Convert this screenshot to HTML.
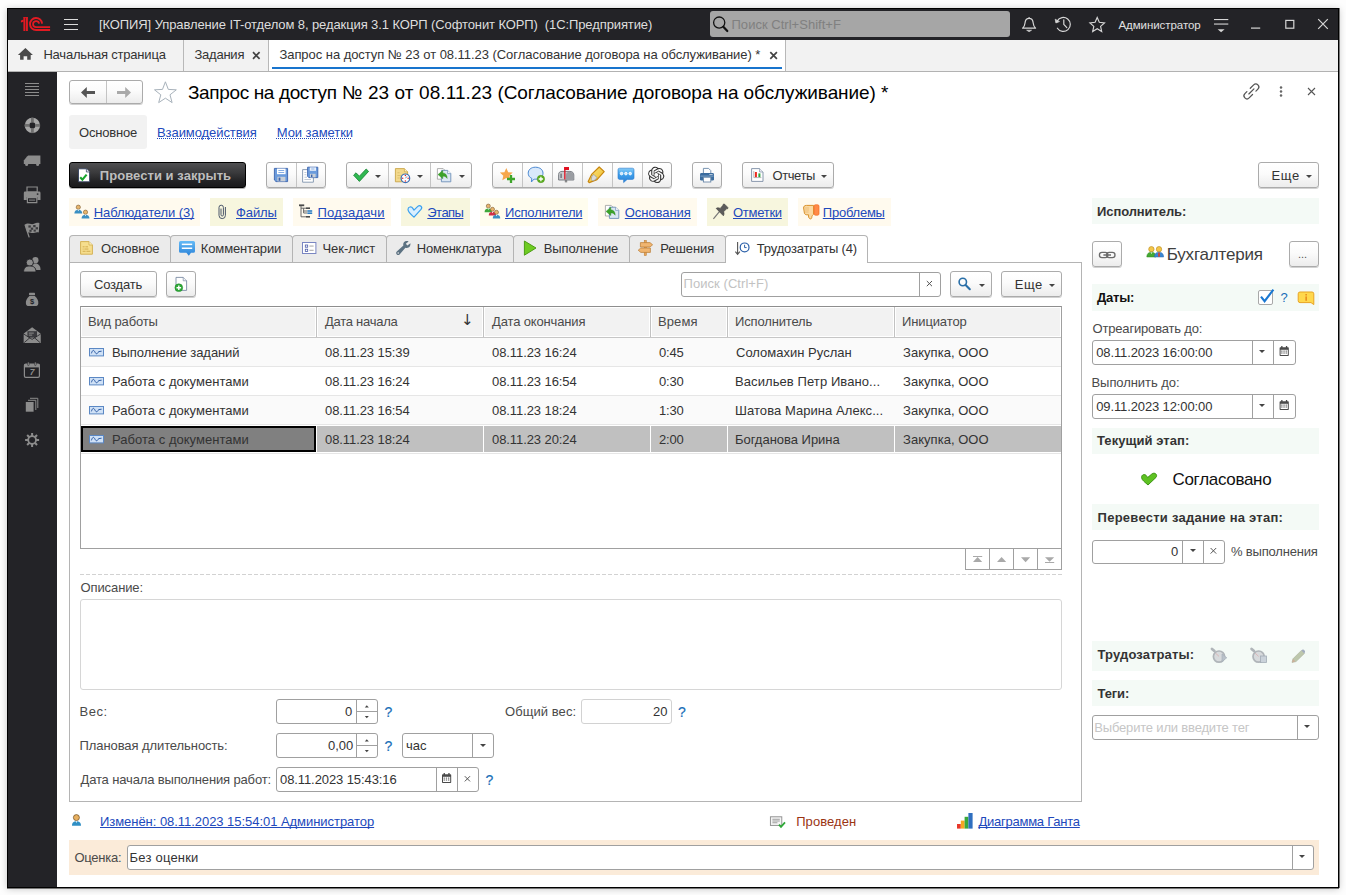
<!DOCTYPE html>
<html lang="ru">
<head>
<meta charset="utf-8">
<title>Запрос на доступ № 23 от 08.11.23</title>
<style>
html,body{margin:0;padding:0;width:1346px;height:895px;overflow:hidden;background:#fdfdfd;}
body{font-family:"Liberation Sans",sans-serif;font-size:13px;color:#333;position:relative;}
.a{position:absolute;}
.t{position:absolute;white-space:nowrap;line-height:16px;font-size:13px;color:#333;}
.b{font-weight:bold;}
.lnk{color:#2149bc;text-decoration:underline;text-decoration-skip-ink:none;text-underline-offset:1px;text-decoration-thickness:1px;}
.dlnk{color:#2149bc;text-decoration:underline dotted;text-decoration-skip-ink:none;text-underline-offset:1px;text-decoration-thickness:1px;}
.btn{position:absolute;box-sizing:border-box;border:1px solid #ababab;border-radius:3px;background:linear-gradient(#ffffff 0%,#fbfbfb 45%,#ececec 100%);box-shadow:0 1px 0 rgba(0,0,0,.18);}
.sep{position:absolute;width:1px;background:#c4c4c4;}
.inp{position:absolute;box-sizing:border-box;border:1px solid #a0a0a0;border-radius:3px;background:#fff;}
.isep{position:absolute;width:1px;background:#a0a0a0;}
.hdr{position:absolute;background:#f4faf6;}
.chip{position:absolute;height:28px;top:198px;}
.tab{position:absolute;box-sizing:border-box;top:235px;height:27px;border:1px solid #b4b4b4;border-bottom:none;border-radius:4px 4px 0 0;background:#ebebeb;}
.cell{position:absolute;white-space:nowrap;line-height:16px;font-size:13px;color:#333;}
.arr{position:absolute;width:0;height:0;border-left:3px solid transparent;border-right:3px solid transparent;border-top:3px solid #444;}
svg{position:absolute;overflow:visible;z-index:5;pointer-events:none;}
.t,.cell,.q{z-index:6;}
.q{position:absolute;color:#1a6fb8;font-size:14px;line-height:16px;font-weight:normal;-webkit-text-stroke:0.2px #1a6fb8;}
</style>
</head>
<body>
<!-- window frame -->
<div class="a" id="win" style="left:7px;top:8px;width:1332px;height:880px;box-sizing:border-box;border:1px solid #000;background:#fff;box-shadow:1px 0 0 #777,0 1px 0 #777,0 1px 7px rgba(0,0,0,.22);"></div>

<!-- ===== title bar ===== -->
<div class="a" id="titlebar" style="left:8px;top:9px;width:1330px;height:31px;background:#232327;"></div>

<svg style="left:0;top:0" width="1346" height="72" viewBox="0 0 1346 72">
<g fill="#e21a22">
<rect x="23.4" y="17.2" width="1.6" height="13.8"/><rect x="25.6" y="17.2" width="2.3" height="13.8"/><path d="M20.9 20.6 L23.6 19.6 V21.8 L20.9 22.4 Z"/><rect x="23.4" y="17.2" width="4.5" height="0.9"/>
</g>
<g fill="none" stroke="#e21a22">
<path d="M42.1 23.6 A6.05 6.05 0 1 0 36.05 30.05 L50.1 30.05" stroke-width="1.9"/>
<path d="M39.1 23.6 A3.05 3.05 0 1 0 36.05 27.15 L50.1 27.15" stroke-width="1.8"/>
</g>
<!-- search magnifier -->
<g fill="none" stroke="#111" stroke-linecap="round">
<circle cx="719.2" cy="22.6" r="5.6" stroke-width="1.3"/><path d="M723.3 26.8 L727.3 31" stroke-width="2.2"/>
</g>
<!-- bell -->
<g fill="none" stroke="#d6d6d6" stroke-width="1.2" stroke-linejoin="round">
<path d="M1029.1 17 v1.6 M1022.6 28.2 c2.4-2 2.3-4.2 2.6-6.4 c0.4-2.4 2-3.4 3.9-3.4 s3.5 1 3.9 3.4 c0.3 2.2 0.2 4.4 2.6 6.4 z"/>
<path d="M1026.6 30.2 h5 l-2.5 1.5 z" fill="#d6d6d6" stroke-width="0.6"/>
</g>
<!-- history -->
<g fill="none" stroke="#d6d6d6" stroke-width="1.2" stroke-linecap="round" stroke-linejoin="round">
<path d="M1057.2 21 A7 7 0 1 1 1057.4 28.2"/>
<path d="M1055.3 19.6 l0.6 3.3 l3.2 -1.2 z" fill="#d6d6d6" stroke-width="0.8"/>
<path d="M1063.8 19.8 v4.6 l3 3.2"/>
</g>
<!-- star -->
<path d="M1097.2 17.5 l2.1 4.8 5.2 0.55 -3.9 3.5 1.1 5.1 -4.5 -2.7 -4.5 2.7 1.1 -5.1 -3.9 -3.5 5.2 -0.55 z" fill="none" stroke="#d6d6d6" stroke-width="1.15" stroke-linejoin="miter"/>
<!-- menu -->
<g fill="#d6d6d6"><rect x="1214" y="19" width="14.3" height="1.1"/><rect x="1214" y="23.5" width="14.3" height="1.1"/><path d="M1217.6 29.3 h7 l-3.5 2.9 z"/></g>
<!-- min / max / close -->
<rect x="1251" y="27.5" width="9.2" height="1.2" fill="#d6d6d6"/>
<rect x="1285.8" y="20.4" width="8" height="7.8" fill="none" stroke="#d6d6d6" stroke-width="1.2"/>
<path d="M1318.2 19.2 L1327.8 28.8 M1327.8 19.2 L1318.2 28.8" stroke="#d6d6d6" stroke-width="1.2" fill="none"/>
<!-- home -->
<path d="M25.4 48 L32.9 55 H30.7 V59.8 H27.2 V56.2 H23.6 V59.8 H20.1 V55 H17.9 Z" fill="#4a4a4a"/>
<!-- tab close x -->
<path d="M253 52.2 L259.6 58.8 M259.6 52.2 L253 58.8" stroke="#444" stroke-width="1.7" fill="none"/>
<path d="M770.3 52.2 L776.9 58.8 M776.9 52.2 L770.3 58.8" stroke="#444" stroke-width="1.7" fill="none"/>
</svg>

<div class="a" style="left:64px;top:19px;width:14px;height:1px;background:#dcdcdc;"></div>
<div class="a" style="left:64px;top:24px;width:14px;height:1px;background:#dcdcdc;"></div>
<div class="a" style="left:64px;top:29px;width:14px;height:1px;background:#dcdcdc;"></div>
<div class="t" style="letter-spacing:-0.101px;left:99.00px;top:17px;color:#dedede;">[КОПИЯ] Управление IT-отделом 8, редакция 3.1 КОРП (Софтонит КОРП)&nbsp; (1С:Предприятие)</div>
<div class="a" style="left:710px;top:11px;width:300px;height:26px;background:#a6a6a6;border-radius:3px;"></div>
<div class="t" style="letter-spacing:0.026px;left:731.50px;top:16.5px;color:#808080;font-size:13px;">Поиск Ctrl+Shift+F</div>
<div class="t" style="letter-spacing:-0.066px;left:1118.50px;top:16.5px;color:#e0e0e0;font-size:11.5px;">Администратор</div>
<!--ICON:titleicons-->

<!-- ===== open-windows tab bar ===== -->
<div class="a" id="tabbar" style="left:8px;top:40px;width:1330px;height:31px;background:#f2f2f2;"></div>
<div class="a" style="left:8px;top:71px;width:1330px;height:1px;background:#b2b2b2;"></div>
<div class="a" style="left:269px;top:40px;width:516px;height:31px;background:#fff;"></div>
<div class="a" style="left:183px;top:40px;width:1px;height:31px;background:#b8b8b8;"></div>
<div class="a" style="left:268px;top:40px;width:1px;height:31px;background:#b8b8b8;"></div>
<div class="a" style="left:785px;top:40px;width:1px;height:31px;background:#b8b8b8;"></div>
<div class="a" style="left:272px;top:67px;width:510px;height:2px;background:#1874cd;"></div>
<!--ICON:home-->
<div class="t" style="letter-spacing:-0.192px;left:43.40px;top:47px;">Начальная страница</div>
<div class="t" style="letter-spacing:-0.225px;left:194.40px;top:47px;">Задания</div>
<div class="t" style="letter-spacing:-0.047px;left:279.40px;top:47px;">Запрос на доступ № 23 от 08.11.23 (Согласование договора на обслуживание) *</div>
<!--ICON:tabclose-->

<!-- ===== left sidebar ===== -->
<div class="a" id="sidebar" style="left:8px;top:72px;width:49px;height:815px;background:#232327;"></div>

<svg style="left:0;top:72px" width="57" height="400" viewBox="0 72 57 400">
<g fill="#8c8c8c">
<!-- 1 list -->
<rect x="25" y="83" width="14" height="1"/><rect x="25" y="86" width="14" height="1"/><rect x="25" y="89" width="14" height="1"/><rect x="25" y="92" width="14" height="1"/><rect x="25" y="95" width="14" height="1"/>
</g>
<!-- 2 lifebuoy -->
<circle cx="32.4" cy="125.4" r="5.4" fill="none" stroke="#a6a6a6" stroke-width="4.6"/>
<g fill="#6f6f6f"><rect x="31" y="117.7" width="2.8" height="4.6"/><rect x="31" y="128.5" width="2.8" height="4.6"/><rect x="24.7" y="124" width="4.6" height="2.8"/><rect x="35.5" y="124" width="4.6" height="2.8"/></g>
<!-- 3 truck -->
<g fill="#8c8c8c">
<path d="M28.2 155.4 H40.4 V164 H23.8 V160.6 L27 156.6 Z"/>
<circle cx="26.6" cy="164.6" r="1.5"/><circle cx="37.6" cy="164.6" r="1.5"/>
</g>
<!-- 4 printer -->
<g fill="#8c8c8c">
<path d="M27 187 H37.2 V192 H27 Z" fill="none" stroke="#8c8c8c" stroke-width="1.2"/>
<path d="M25 191.6 H39.2 Q40.5 191.6 40.5 193 V200 H37.4 V197 H26.8 V200 H23.8 V193 Q23.8 191.6 25 191.6 Z"/>
<path d="M27.4 197.6 H36.8 V202.6 H27.4 Z" fill="none" stroke="#8c8c8c" stroke-width="1.2"/>
<rect x="29" y="199.6" width="6.2" height="1" />
<rect x="36.8" y="193.4" width="1.6" height="1.4" fill="#232327"/>
</g>
<!-- 5 flag -->
<g>
<path d="M25 224.6 C28 222 31 225.4 34 223.8 S38 222.6 39.4 223 L38.8 232.4 C36 231.6 34 233.4 31.6 233 S28.4 232.4 27.4 233 Z" fill="#8c8c8c"/>
<path d="M25 224.6 L29.2 237.4" stroke="#8c8c8c" stroke-width="1.3" fill="none"/>
<g fill="#3a3a3e"><rect x="28.4" y="225.4" width="2.4" height="2.2"/><rect x="33.2" y="225" width="2.4" height="2.2"/><rect x="30.8" y="227.6" width="2.4" height="2.2"/><rect x="35.6" y="227.2" width="2.4" height="2.2"/><rect x="29.4" y="229.8" width="2.2" height="2"/><rect x="33.6" y="229.6" width="2.2" height="2"/></g>
</g>
<!-- 6 people -->
<g fill="#8c8c8c">
<circle cx="35.4" cy="260.2" r="3.1"/><path d="M31 270 C31 265 33 263.4 35.4 263.4 S40.5 265 40.5 269.6 V270 Z"/>
<circle cx="29.8" cy="262.6" r="3.6" stroke="#232327" stroke-width="0.9"/><path d="M23.6 272 C23.6 267 26.4 266 29.8 266 S36 267 36 272 Z" stroke="#232327" stroke-width="0.9"/>
</g>
<!-- 7 money bag -->
<g fill="#8c8c8c">
<rect x="29" y="292.8" width="6" height="2.2" rx="0.6"/>
<path d="M29.6 295.8 H34.6 C37.6 298.4 38.6 301 38.3 303.4 C38.1 305.2 37 306 35.4 306 H28.8 C27.2 306 26.1 305.2 25.9 303.4 C25.6 301 26.6 298.4 29.6 295.8 Z"/>
</g>
<text x="32.1" y="304.2" font-family="Liberation Sans,sans-serif" font-size="7.5" font-weight="bold" fill="#232327" text-anchor="middle">$</text>
<!-- 8 envelope -->
<g fill="#8c8c8c">
<path d="M23.8 333.4 L32.1 327.2 L40.5 333.4 V342.9 H23.8 Z"/>
<rect x="27.4" y="331.2" width="9.6" height="6.4" fill="#3a3a3e"/>
<rect x="28.8" y="332.6" width="5" height="1" fill="#8c8c8c"/><rect x="28.8" y="334.6" width="3.4" height="1" fill="#8c8c8c"/>
<path d="M23.8 334.4 L32.1 339.4 L40.5 334.4 V342.9 H23.8 Z" fill="#8c8c8c"/>
<path d="M24.2 342.6 L30 337.6 M40.1 342.6 L34.3 337.6 M24 334.2 L32.1 339.4 L40.3 334.2" stroke="#232327" stroke-width="0.8" fill="none"/>
</g>
<!-- 9 calendar -->
<g>
<rect x="24.4" y="364" width="15" height="13.4" rx="1.4" fill="none" stroke="#8c8c8c" stroke-width="1.2"/>
<rect x="24.4" y="364" width="15" height="3.4" fill="#8c8c8c"/>
<rect x="27.6" y="362" width="1.6" height="3.6" rx="0.8" fill="#8c8c8c" stroke="#232327" stroke-width="0.5"/><rect x="34.6" y="362" width="1.6" height="3.6" rx="0.8" fill="#8c8c8c" stroke="#232327" stroke-width="0.5"/>
<text x="32" y="375.4" font-family="Liberation Sans,sans-serif" font-size="8.5" font-weight="bold" font-style="italic" fill="#8c8c8c" text-anchor="middle">7</text>
</g>
<!-- 10 pages -->
<g fill="none" stroke="#8c8c8c" stroke-width="1">
<path d="M30 398.3 H37.8 V408"/><path d="M28 400.3 H35.8 V410"/>
<rect x="25.8" y="402" width="7.8" height="9.7" fill="#8c8c8c" stroke="none"/>
</g>
<!-- 11 gear -->
<g transform="translate(32.1 440)">
<g stroke="#8c8c8c" stroke-width="2" stroke-linecap="butt">
<path d="M0 -7 V7 M-7 0 H7 M-4.95 -4.95 L4.95 4.95 M-4.95 4.95 L4.95 -4.95"/>
</g>
<circle r="3.9" fill="#232327" stroke="#8c8c8c" stroke-width="1.8"/>
</g>
</svg>


<!-- ===== form header ===== -->
<div class="btn" style="left:69px;top:80px;width:74px;height:24px;"></div>
<div class="sep" style="left:106px;top:81px;height:22px;"></div>

<svg style="left:0;top:72px" width="1346" height="40" viewBox="0 72 1346 40">
<path d="M81 92.5 L86.8 87 V91 H95 V94 H86.8 V98 Z" fill="#555"/>
<path d="M131 92.5 L125.2 87 V91 H117 V94 H125.2 V98 Z" fill="#a9a9a9"/>
<path d="M165.4 81.8 l2.9 7.6 8 0.4 -6.3 5 2.1 7.8 -6.7 -4.4 -6.7 4.4 2.1 -7.8 -6.3 -5 8 -0.4 z" fill="#fff" stroke="#a8b2bb" stroke-width="1" stroke-linejoin="miter"/>
<!-- link -->
<g transform="translate(1251.4 91.4) rotate(-45)" fill="none" stroke="#555" stroke-width="1.25" stroke-linecap="round">
<path d="M1.4 -3 H6.2 A3 3 0 0 1 6.2 3 H3.4"/>
<path d="M-1.4 3 H-6.2 A3 3 0 0 1 -6.2 -3 H-3.4"/>
<path d="M-3.6 0 H3.6"/>
</g>
<g fill="#666"><circle cx="1281" cy="87.6" r="1.25"/><circle cx="1281" cy="91.5" r="1.25"/><circle cx="1281" cy="95.4" r="1.25"/></g>
<path d="M1308 88 L1315 95 M1315 88 L1308 95" stroke="#555" stroke-width="1.1" fill="none"/>
</svg>

<div class="t" style="letter-spacing:-0.364px;left:188.00px;top:81px;font-size:19px;line-height:24px;color:#000;">Запрос на доступ</div><div class="t" style="letter-spacing:0.087px;left:342.10px;top:81px;font-size:19px;line-height:24px;color:#000;">№ 23 от 08.11.23</div><div class="t" style="letter-spacing:-0.085px;left:497.40px;top:81px;font-size:19px;line-height:24px;color:#000;">(Согласование договора на обслуживание) *</div>
<!--ICON:formicons-->

<div class="a" style="left:69px;top:115px;width:78px;height:34px;background:#f2f2f2;border-radius:3px;"></div>
<div class="t" style="letter-spacing:-0.193px;left:79.00px;top:125px;">Основное</div>
<div class="t dlnk" style="letter-spacing:-0.078px;left:157.00px;top:125px;">Взаимодействия</div>
<div class="t dlnk" style="letter-spacing:-0.066px;left:276.80px;top:125px;">Мои заметки</div>

<!-- ===== command bar ===== -->
<div class="a" style="left:69px;top:162px;width:177px;height:26px;box-sizing:border-box;border:1px solid #000;border-radius:3px;background:linear-gradient(#505052 0%,#3a3a3c 40%,#232325 75%,#1a1a1c 100%);box-shadow:0 1px 0 rgba(0,0,0,.3);"></div>
<div class="t b" style="letter-spacing:0.056px;left:99.80px;top:168px;color:#bebebe;">Провести и закрыть</div>

<div class="btn" style="left:266px;top:162px;width:60px;height:26px;"></div>
<div class="sep" style="left:296px;top:163px;height:24px;"></div>
<div class="btn" style="left:346px;top:162px;width:126px;height:26px;"></div>
<div class="sep" style="left:388px;top:163px;height:24px;"></div>
<div class="sep" style="left:430px;top:163px;height:24px;"></div>
<div class="arr" style="left:375px;top:175px;"></div>
<div class="arr" style="left:417px;top:175px;"></div>
<div class="arr" style="left:459px;top:175px;"></div>
<div class="btn" style="left:492px;top:162px;width:180px;height:26px;"></div>
<div class="sep" style="left:522px;top:163px;height:24px;"></div>
<div class="sep" style="left:552px;top:163px;height:24px;"></div>
<div class="sep" style="left:582px;top:163px;height:24px;"></div>
<div class="sep" style="left:612px;top:163px;height:24px;"></div>
<div class="sep" style="left:642px;top:163px;height:24px;"></div>
<div class="btn" style="left:692px;top:162px;width:30px;height:26px;"></div>
<div class="btn" style="left:742px;top:162px;width:92px;height:26px;"></div>
<div class="t" style="letter-spacing:-0.459px;left:772.60px;top:168px;">Отчеты</div>
<div class="arr" style="left:821px;top:175px;"></div>
<div class="btn" style="left:1258px;top:162px;width:61px;height:26px;"></div>
<div class="t" style="letter-spacing:0.688px;left:1271.40px;top:168px;">Еще</div>
<div class="arr" style="left:1305.5px;top:175px;"></div>

<svg style="left:0;top:158px" width="1346" height="34" viewBox="0 158 1346 34">
<!-- post & close doc icon -->
<path d="M78.5 168.8 H86.4 L89.6 172 V181.8 H78.5 Z" fill="#fff" stroke="#33415e" stroke-width="0.9"/>
<path d="M86.4 168.8 V172 H89.6" fill="#dfe6f2" stroke="#33415e" stroke-width="0.7"/>
<path d="M80.2 177.2 L82.4 179.6 L86.6 174.6" fill="none" stroke="#18a52e" stroke-width="2.1"/>
<!-- floppy 1 -->
<g>
<path d="M274.4 168.4 H287.6 V181.6 H276 L274.4 180 Z" fill="#6b9bdc" stroke="#3a63ad" stroke-width="0.9"/>
<rect x="277" y="168.6" width="8.6" height="5.6" fill="#fff"/>
<rect x="278.4" y="170" width="5.8" height="0.9" fill="#7aa5e0"/><rect x="278.4" y="172" width="5.8" height="0.9" fill="#7aa5e0"/>
<rect x="277.4" y="176.8" width="8" height="4.6" fill="#c9cfd6"/><rect x="278.6" y="177.6" width="1.8" height="3.2" fill="#3a63ad"/>
</g>
<!-- doc + floppy -->
<g>
<path d="M302.6 169.6 H311 L313.4 172 V182.2 H302.6 Z" fill="#fff" stroke="#7f93ad" stroke-width="0.9"/>
<g fill="#b4bfcc"><rect x="304.4" y="172" width="2" height="0.8"/><rect x="304.4" y="174.4" width="2" height="0.8"/><rect x="304.4" y="176.8" width="2.6" height="0.8"/><rect x="304.4" y="179.2" width="6.6" height="0.8"/></g>
<path d="M307.6 167.2 H317.8 V177.6 H308.8 L307.6 176.4 Z" fill="#6b9bdc" stroke="#3a63ad" stroke-width="0.9"/>
<rect x="309.8" y="167.4" width="6.2" height="3.4" fill="#eaf1fb"/><rect x="311.2" y="168.6" width="3.2" height="0.8" fill="#7aa5e0"/>
<rect x="310" y="173.8" width="5.6" height="3.6" fill="#c9cfd6"/><rect x="311" y="174.6" width="1.4" height="2.4" fill="#3a63ad"/>
</g>
<!-- green check -->
<path d="M353.6 175.2 L356 172.8 L359.4 176.2 L366.2 169 L368.6 171.4 L359.4 181.4 Z" fill="#2fb851" stroke="#1f8a3a" stroke-width="0.9" stroke-linejoin="round"/>
<!-- doc + clock -->
<g>
<path d="M395.4 168.6 H404.4 L407.6 171.8 V181.8 H395.4 Z" fill="#f3d98c" stroke="#c9a648" stroke-width="0.9"/>
<path d="M404.4 168.6 V171.8 H407.6" fill="#faedc0" stroke="#c9a648" stroke-width="0.7"/>
<g fill="#d8bb66"><rect x="397.4" y="172.4" width="2.2" height="0.8"/><rect x="397.4" y="175" width="3.4" height="0.8"/><rect x="397.4" y="177.6" width="2.2" height="0.8"/></g>
<circle cx="405.4" cy="178.3" r="4.3" fill="#fff" stroke="#3a6eb4" stroke-width="1.2"/>
<g fill="#e02a2a"><circle cx="405.4" cy="175.6" r="0.75"/><circle cx="408.1" cy="178.3" r="0.75"/><circle cx="405.4" cy="181" r="0.75"/><circle cx="402.7" cy="178.3" r="0.75"/></g>
<path d="M405.4 178.3 L407 176.4" stroke="#3a6eb4" stroke-width="0.8"/>
</g>
<!-- doc + green back arrow -->
<g>
<path d="M437.4 168.6 H443.2 L444.6 170 V179.2 H437.4 Z" fill="#fff" stroke="#9a9a9a" stroke-width="0.8"/>
<path d="M441.4 170.4 H447.6 L450.8 173.6 V181.8 H441.4 Z" fill="#dbe7f3" stroke="#6c8fb8" stroke-width="0.9"/>
<path d="M447.6 170.4 V173.6 H450.8" fill="#fff" stroke="#6c8fb8" stroke-width="0.7"/>
<path d="M438 174.6 L442.8 170.4 V173 C445.8 173.2 447.2 175.2 447.2 178.4 C446 176.8 445 176.2 442.8 176.2 V178.8 Z" fill="#3ba22a" stroke="#2a8a1c" stroke-width="0.4"/>
</g>
<!-- star + plus -->
<path d="M506.3 168 l1.9 4.2 4.5 0.4 -3.4 3.1 1 4.5 -4 -2.3 -4 2.3 1 -4.5 -3.4 -3.1 4.5 -0.4 z" fill="#f6a74c"/>
<path d="M511 175 V183 M507 179 H515" stroke="#3fa52a" stroke-width="2.3" fill="none"/>
<!-- bubble + plus -->
<path d="M535.4 167.2 C540 167.2 543 169.8 543 173.2 C543 176.8 540 179.2 535.4 179.2 C534.8 179.2 534.4 179.2 534 179.1 L531.4 182 L531.8 178.4 C529.4 177.4 528.2 175.4 528.2 173.2 C528.2 169.8 531 167.2 535.4 167.2 Z" fill="#d9e9fb" stroke="#4a88d2" stroke-width="1"/>
<circle cx="540.9" cy="179" r="3.7" fill="#5aad1f" stroke="#4a9416" stroke-width="0.5"/>
<path d="M540.9 176.8 V181.2 M538.7 179 H543.1" stroke="#fff" stroke-width="1.3"/>
<!-- mailbox -->
<g>
<rect x="564.8" y="179.6" width="2.4" height="2.8" fill="#8a8a8a"/>
<path d="M558.6 180 V174.6 C558.6 172.4 560 171.4 562 171.4 H570 C572.6 171.4 573.8 173 573.8 175 V180 Z" fill="#c9cbce" stroke="#6e7278" stroke-width="0.9"/>
<path d="M566 180 V175 C566 173 567.4 171.8 569.6 171.8 C572 171.8 573.4 173.2 573.4 175 V180 Z" fill="#9a9da2"/>
<rect x="560.4" y="173.6" width="1.4" height="4.4" fill="#6e7278"/>
<rect x="564.2" y="167" width="1.3" height="12.4" fill="#e01020"/><rect x="564.2" y="167" width="4.8" height="3" fill="#e01020"/>
</g>
<!-- highlighter -->
<defs><linearGradient id="gh" x1="0" y1="0" x2="1" y2="1"><stop offset="0" stop-color="#fbe88a"/><stop offset="1" stop-color="#eeb820"/></linearGradient></defs>
<g>
<path d="M599.2 167 L604.2 171.6 L597 179.6 L589.2 182.6 L588.2 181.6 L591.6 174.4 Z" fill="url(#gh)" stroke="#c8860e" stroke-width="1.2" stroke-linejoin="round"/>
<path d="M591.9 176.2 L593.9 174.4 L596.9 177.6 L595.2 179.9 L592.6 181 L591.2 179.4 Z" fill="#dadada" stroke="#8c8c8c" stroke-width="0.6" stroke-linejoin="round"/>
</g>
<!-- chat bubble blue -->
<defs><linearGradient id="gb" x1="0" y1="0" x2="0" y2="1"><stop offset="0" stop-color="#86ccf8"/><stop offset="0.45" stop-color="#3f9fea"/><stop offset="1" stop-color="#2a80d8"/></linearGradient></defs>
<path d="M619.6 168.2 H632.4 Q634 168.2 634 169.8 V177.8 Q634 179.4 632.4 179.4 H627.2 L623.6 182.6 V179.4 H619.6 Q618 179.4 618 177.8 V169.8 Q618 168.2 619.6 168.2 Z" fill="url(#gb)" stroke="#2a7acc" stroke-width="0.6"/>
<g fill="#cfe6fb" stroke="#fff" stroke-width="0.9"><circle cx="621.6" cy="173.6" r="1.3"/><circle cx="625.9" cy="173.6" r="1.3"/><circle cx="630.2" cy="173.6" r="1.3"/></g>
<!-- knot (AI) -->
<g transform="translate(648 166.7) scale(0.683)"><path d="M22.2819 9.8211a5.9847 5.9847 0 0 0-.5157-4.9108 6.0462 6.0462 0 0 0-6.5098-2.9A6.0651 6.0651 0 0 0 4.9807 4.1818a5.9847 5.9847 0 0 0-3.9977 2.9 6.0462 6.0462 0 0 0 .7427 7.0966 5.98 5.98 0 0 0 .511 4.9107 6.051 6.051 0 0 0 6.5146 2.9001A5.9847 5.9847 0 0 0 13.2599 24a6.0557 6.0557 0 0 0 5.7718-4.2058 5.9894 5.9894 0 0 0 3.9977-2.9001 6.0557 6.0557 0 0 0-.7475-7.0729zm-9.022 12.6081a4.4755 4.4755 0 0 1-2.8764-1.0408l.1419-.0804 4.7783-2.7582a.7948.7948 0 0 0 .3927-.6813v-6.7369l2.02 1.1686a.071.071 0 0 1 .038.052v5.5826a4.504 4.504 0 0 1-4.4945 4.4944zm-9.6607-4.1254a4.4708 4.4708 0 0 1-.5346-3.0137l.142.0852 4.783 2.7582a.7712.7712 0 0 0 .7806 0l5.8428-3.3685v2.3324a.0804.0804 0 0 1-.0332.0615L9.74 19.9502a4.4992 4.4992 0 0 1-6.1408-1.6464zM2.3408 7.8956a4.485 4.485 0 0 1 2.3655-1.9728V11.6a.7664.7664 0 0 0 .3879.6765l5.8144 3.3543-2.0201 1.1685a.0757.0757 0 0 1-.071 0l-4.8303-2.7865A4.504 4.504 0 0 1 2.3408 7.872zm16.5963 3.8558L13.1038 8.364 15.1192 7.2a.0757.0757 0 0 1 .071 0l4.8303 2.7913a4.4944 4.4944 0 0 1-.6765 8.1042v-5.6772a.79.79 0 0 0-.407-.667zm2.0107-3.0231l-.142-.0852-4.7735-2.7818a.7759.7759 0 0 0-.7854 0L9.409 9.2297V6.8974a.0662.0662 0 0 1 .0284-.0615l4.8303-2.7866a4.4992 4.4992 0 0 1 6.6802 4.66zM8.3065 12.863l-2.02-1.1638a.0804.0804 0 0 1-.038-.0567V6.0742a4.4992 4.4992 0 0 1 7.3757-3.4537l-.142.0805L8.704 5.459a.7948.7948 0 0 0-.3927.6813zm1.0976-2.3654l2.602-1.4998 2.6069 1.4998v2.9994l-2.5974 1.4997-2.6067-1.4997Z" fill="#333"/></g>
<!-- printer -->
<g>
<path d="M703.4 168.4 H708.6 L710.8 170.6 V174 H703.4 Z" fill="#fff" stroke="#6a88a8" stroke-width="0.9"/>
<path d="M701.4 173 H712.6 Q714 173 714 174.4 V179.2 Q714 180.4 712.6 180.4 H701.4 Q700 180.4 700 179.2 V174.4 Q700 173 701.4 173 Z" fill="#3b6c9e"/>
<rect x="700.4" y="175.6" width="13.2" height="1" fill="#7fa4c8"/>
<rect x="709.6" y="174" width="1" height="1" fill="#fff"/><rect x="711.4" y="174" width="1" height="1" fill="#fff"/>
<rect x="703.4" y="177.2" width="7.4" height="4.8" fill="#fff" stroke="#6a88a8" stroke-width="0.9"/>
</g>
<!-- reports doc -->
<g>
<path d="M751.6 168.6 H759.6 L763 172 V181.4 H751.6 Z" fill="#fff" stroke="#7c8ca4" stroke-width="0.9"/>
<path d="M759.6 168.6 V172 H763" fill="#eef1f6" stroke="#7c8ca4" stroke-width="0.7"/>
<rect x="754.9" y="172" width="2" height="5.2" fill="#ee2a1e"/><rect x="758.4" y="173.4" width="2" height="3.8" fill="#2aa53a"/>
<path d="M753.8 171 V177.6 H761.4" fill="none" stroke="#8a8a8a" stroke-width="0.6"/>
</g>
</svg>


<!-- ===== link chips ===== -->
<div class="chip" style="left:69px;width:131px;background:#fffaee;"></div>
<div class="chip" style="left:210px;width:73px;background:#f7f6de;"></div>
<div class="chip" style="left:293px;width:98px;background:#fffaee;"></div>
<div class="chip" style="left:401px;width:69px;background:#f7f6de;"></div>
<div class="chip" style="left:480px;width:108px;background:#fffdee;"></div>
<div class="chip" style="left:598px;width:99px;background:#fffaee;"></div>
<div class="chip" style="left:707px;width:81px;background:#f7f6de;"></div>
<div class="chip" style="left:798px;width:93px;background:#fffaee;"></div>
<div class="t lnk" style="letter-spacing:-0.099px;left:93.80px;top:205px;">Наблюдатели (3)</div>
<div class="t lnk" style="letter-spacing:-0.117px;left:236.00px;top:205px;">Файлы</div>
<div class="t lnk" style="letter-spacing:0.178px;left:317.50px;top:205px;">Подзадачи</div>
<div class="t lnk" style="letter-spacing:-0.530px;left:427.30px;top:205px;">Этапы</div>
<div class="t lnk" style="letter-spacing:-0.175px;left:505.00px;top:205px;">Исполнители</div>
<div class="t lnk" style="letter-spacing:-0.058px;left:624.80px;top:205px;">Основания</div>
<div class="t lnk" style="letter-spacing:-0.276px;left:733.00px;top:205px;">Отметки</div>
<div class="t lnk" style="letter-spacing:-0.232px;left:822.80px;top:205px;">Проблемы</div>

<svg style="left:0;top:196px" width="1346" height="32" viewBox="0 196 1346 32">
<!-- observers -->
<circle cx="78.3" cy="207.2" r="2.12" fill="#e8b56c" stroke="#7a5a30" stroke-width="0.6"/><path d="M74.4 213.6 C74.4 210.5 76.5 209.8 78.3 209.8 S82.2 210.5 82.2 213.6 Z" fill="#3a8fc2"/><path d="M77.5 209.8 L78.3 211.3 L79.1 209.8 Z" fill="#fff"/>
<circle cx="85.5" cy="212.2" r="2.12" fill="#e8b56c" stroke="#7a5a30" stroke-width="0.6"/><path d="M81.6 218.6 C81.6 215.5 83.7 214.8 85.5 214.8 S89.4 215.5 89.4 218.6 Z" fill="#3a8fc2"/><path d="M84.7 214.8 L85.5 216.3 L86.3 214.8 Z" fill="#fff"/>
<!-- paperclip -->
<path d="M225.4 207.4 V215.4 A3.2 3.2 0 0 1 219 215.4 V207.4 A2.2 2.2 0 0 1 223.4 207.4 V214.8 A1.2 1.2 0 0 1 221 214.8 V209" fill="none" stroke="#4b576b" stroke-width="1" stroke-linecap="round"/>
<!-- tree -->
<g>
<rect x="299" y="204.4" width="5.2" height="1.8" fill="#4a4a4a"/>
<path d="M301 206 V216.8 H306 M301 208.2 H306 M303.6 208.2 V213 H307.4 M303.6 211 H307.4" fill="none" stroke="#5a5a5a" stroke-width="0.9"/>
<rect x="306" y="207.4" width="4" height="1.6" fill="#4a4a4a"/><rect x="306" y="216" width="4" height="1.6" fill="#4a4a4a"/>
<rect x="307.4" y="210.2" width="4.8" height="1.6" fill="#2f7fc4"/><rect x="307.4" y="212.4" width="4.8" height="1.6" fill="#2f7fc4"/>
</g>
<!-- stages heart-check -->
<path d="M408 209.4 C408 206.6 411.4 206 413 208.6 L414 210.2 L417.8 206.4 C420 204.4 423 207 421 209.4 L414 217.2 C411.6 214.8 408 212 408 209.4 Z" fill="#d9efff" stroke="#3aa0ee" stroke-width="1.2" stroke-linejoin="round"/>
<!-- executors: 3 people -->
<circle cx="488.3" cy="206.1" r="2.02" fill="#e8b56c" stroke="#7a5a30" stroke-width="0.6"/><path d="M484.6 212.3 C484.6 209.3 486.5 208.6 488.3 208.6 S492.0 209.3 492.0 212.3 Z" fill="#3fa83a"/><path d="M487.5 208.6 L488.3 210.0 L489.1 208.6 Z" fill="#fff"/>
<circle cx="492.5" cy="209.3" r="2.02" fill="#e8b56c" stroke="#7a5a30" stroke-width="0.6"/><path d="M488.8 215.5 C488.8 212.5 490.7 211.8 492.5 211.8 S496.2 212.5 496.2 215.5 Z" fill="#d03048"/><path d="M491.7 211.8 L492.5 213.2 L493.3 211.8 Z" fill="#fff"/>
<circle cx="496.5" cy="212.3" r="2.02" fill="#e8b56c" stroke="#7a5a30" stroke-width="0.6"/><path d="M492.8 218.5 C492.8 215.5 494.7 214.8 496.5 214.8 S500.2 215.5 500.2 218.5 Z" fill="#3a8fc2"/><path d="M495.7 214.8 L496.5 216.2 L497.3 214.8 Z" fill="#fff"/>
<!-- grounds: doc + arrow -->
<g>
<path d="M605.4 205.4 H611.2 L612.6 206.8 V216 H605.4 Z" fill="#fff" stroke="#9a9a9a" stroke-width="0.8"/>
<path d="M609.4 207.2 H615.6 L618.8 210.4 V218.4 H609.4 Z" fill="#dbe7f3" stroke="#6c8fb8" stroke-width="0.9"/>
<path d="M615.6 207.2 V210.4 H618.8" fill="#fff" stroke="#6c8fb8" stroke-width="0.7"/>
<path d="M606 211.4 L610.8 207.2 V209.8 C613.8 210 615.2 212 615.2 215.2 C614 213.6 613 213 610.8 213 V215.6 Z" fill="#3ba22a" stroke="#2a8a1c" stroke-width="0.4"/>
</g>
<!-- pin -->
<g>
<path d="M713.4 218.8 L719.4 211.6" stroke="#777" stroke-width="1.2"/>
<path d="M716.2 208.4 C717.6 207.6 719 207.8 720.2 208.4 L723.2 205 C722.6 204.6 723.8 203.6 724.6 204.2 L727.8 207.4 C728.4 208.2 727.4 209.2 726.8 208.6 L723.6 211.8 C724.2 213.2 724.2 214.6 723.4 215.8 Z" fill="#5c5c5c" stroke="#3c3c3c" stroke-width="0.6"/>
</g>
<!-- thumbs down -->
<g>
<path d="M813.6 205.4 H806.4 C804.4 205.4 803.4 206.6 803.6 208 L804.4 213 C804.6 214.2 805.6 214.8 806.8 214.8 H808.6 C808.4 216.4 808.6 217.8 809.6 218.6 C810.8 219.4 811.8 218.6 811.8 217.4 C811.8 216 812.8 214.8 813.6 214.2 Z" fill="#fbd9a2" stroke="#d9922c" stroke-width="1"/>
<path d="M804.6 208 H809 M804.8 210 H809 M805 212 H808.6" stroke="#e8b66a" stroke-width="0.7"/>
<rect x="814" y="204.8" width="5" height="10.4" rx="1.4" fill="#ff8a48" stroke="#f46a20" stroke-width="0.7"/>
</g>
</svg>



<!-- ===== pages (tabs) ===== -->
<div class="a" id="panel" style="left:69px;top:262px;width:1013px;height:540px;box-sizing:border-box;border:1px solid #b4b4b4;background:#fff;"></div>
<div class="tab" style="left:69px;width:102px;"></div>
<div class="tab" style="left:170px;width:123px;"></div>
<div class="tab" style="left:292px;width:95px;"></div>
<div class="tab" style="left:386px;width:128px;"></div>
<div class="tab" style="left:513px;width:117px;"></div>
<div class="tab" style="left:629px;width:97px;"></div>
<div class="tab" style="left:725px;width:143px;height:28px;background:#fff;"></div>
<div class="t" style="letter-spacing:-0.150px;left:101.00px;top:241px;">Основное</div>
<div class="t" style="letter-spacing:-0.133px;left:200.80px;top:241px;">Комментарии</div>
<div class="t" style="letter-spacing:-0.066px;left:322.50px;top:241px;">Чек-лист</div>
<div class="t" style="letter-spacing:-0.229px;left:416.80px;top:241px;">Номенклатура</div>
<div class="t" style="letter-spacing:-0.127px;left:543.80px;top:241px;">Выполнение</div>
<div class="t" style="letter-spacing:-0.074px;left:660.30px;top:241px;">Решения</div>
<div class="t" style="letter-spacing:-0.170px;left:756.80px;top:241px;">Трудозатраты (4)</div>

<svg style="left:0;top:232px" width="1346" height="34" viewBox="0 232 1346 34">
<!-- yellow doc -->
<path d="M80.6 241.6 H89 L92.4 245 V254.2 H80.6 Z" fill="#f6de8e" stroke="#d4b154" stroke-width="1" stroke-linejoin="round"/>
<path d="M89 241.6 V245 H92.4" fill="#fbeebc" stroke="#d4b154" stroke-width="0.8"/>
<g fill="#cfa84a"><rect x="82.6" y="246.4" width="2" height="0.9"/><rect x="85.4" y="246.4" width="2.6" height="0.9"/><rect x="82.6" y="248.6" width="1" height="0.9"/><rect x="84.4" y="248.6" width="4" height="0.9"/><rect x="82.6" y="250.8" width="3" height="0.9"/><rect x="86.4" y="250.8" width="4" height="0.9"/></g>
<!-- comments bubble -->
<defs><linearGradient id="gc" x1="0" y1="0" x2="0" y2="1"><stop offset="0" stop-color="#64baf6"/><stop offset="1" stop-color="#2a82d8"/></linearGradient></defs>
<path d="M180.6 241 H193.4 Q195 241 195 242.6 V251.2 Q195 252.8 193.4 252.8 H191 L188.8 255.8 L186.4 252.8 H180.6 Q179 252.8 179 251.2 V242.6 Q179 241 180.6 241 Z" fill="url(#gc)"/>
<rect x="181.8" y="243.6" width="10.4" height="1.5" fill="#fff"/><rect x="181.8" y="247.5" width="10.4" height="1.5" fill="#fff"/>
<!-- checklist -->
<rect x="302.5" y="242.5" width="13.4" height="11" fill="#fff" stroke="#7a86c2" stroke-width="1"/>
<rect x="305.3" y="245" width="2.4" height="2.2" fill="#fff" stroke="#4a5aa8" stroke-width="0.8"/><rect x="305.3" y="249.2" width="2.4" height="2.2" fill="#fff" stroke="#4a5aa8" stroke-width="0.8"/>
<rect x="309.4" y="245.6" width="4.2" height="0.9" fill="#9a9a9a"/><rect x="309.4" y="249.8" width="4.2" height="0.9" fill="#9a9a9a"/>
<!-- wrench -->
<path d="M396.8 254.4 C395.8 253.4 396 252.4 396.8 251.6 L403.4 245.6 C402.8 243.6 403.6 242 405.2 241.2 C406.4 240.8 407.6 240.8 408.6 241.4 L405.8 243.8 L407.4 245.6 L410.4 243.2 C410.6 244.6 410.2 246.2 409 247.2 C407.8 248 406.6 248.2 405.4 247.8 L399.6 254.4 C398.8 255.2 397.6 255.2 396.8 254.4 Z" fill="#5c7282"/>
<circle cx="398.2" cy="253" r="0.8" fill="#ebebeb"/>
<!-- play -->
<path d="M524.4 241 L536 248 L524.4 255.2 Z" fill="#6ecb22" stroke="#4c9c16" stroke-width="1" stroke-linejoin="round"/>
<!-- signpost -->
<g>
<rect x="644.2" y="240.4" width="2.2" height="15.2" fill="#e6a45a" stroke="#b87a32" stroke-width="0.5"/>
<path d="M640.4 242.6 H650 L652.6 244.8 L650 247 H640.4 Z" fill="#f0b570" stroke="#b87a32" stroke-width="0.7"/>
<path d="M650.4 248 H640.8 L638.2 250.2 L640.8 252.4 H650.4 Z" fill="#f0b570" stroke="#b87a32" stroke-width="0.7"/>
</g>
<!-- arrow + clock -->
<path d="M737.6 242 V254 M735.4 251.6 L737.6 254.4 L739.8 251.6" fill="none" stroke="#555" stroke-width="1.1"/>
<circle cx="744.6" cy="247.4" r="4.4" fill="#fff" stroke="#2a5fa8" stroke-width="1.2"/>
<path d="M744.6 244.8 V247.6 H746.6" fill="none" stroke="#2a5fa8" stroke-width="1"/>
</svg>



<!-- ===== table toolbar ===== -->
<div class="btn" style="left:80px;top:271px;width:77px;height:26px;"></div>
<div class="t" style="letter-spacing:-0.222px;left:94.10px;top:277px;">Создать</div>
<div class="btn" style="left:166px;top:271px;width:30px;height:26px;"></div>
<div class="inp" style="left:681px;top:272px;width:260px;height:25px;"></div>
<div class="isep" style="left:919px;top:273px;height:23px;"></div>
<div class="t" style="letter-spacing:0.060px;left:683.50px;top:276px;color:#c2c2c2;">Поиск (Ctrl+F)</div>
<div class="btn" style="left:950px;top:271px;width:42px;height:26px;"></div>
<div class="arr" style="left:979px;top:284px;"></div>
<div class="btn" style="left:1001px;top:271px;width:61px;height:26px;"></div>
<div class="t" style="letter-spacing:0.588px;left:1014.70px;top:277px;">Еще</div>
<div class="arr" style="left:1049px;top:284px;"></div>
<!-- ===== table ===== -->
<div class="a" id="grid" style="left:80px;top:306px;width:982px;height:243px;box-sizing:border-box;border:1px solid #a0a0a0;border-top-color:#8e8e8e;background:#fff;"></div>
<div class="a" style="left:81px;top:307px;width:980px;height:30px;background:#fff;"></div>
<div class="a" style="left:82px;top:308px;width:233px;height:28px;background:#f2f2f2;"></div>
<div class="a" style="left:318px;top:308px;width:164px;height:28px;background:#f2f2f2;"></div>
<div class="a" style="left:485px;top:308px;width:164px;height:28px;background:#f2f2f2;"></div>
<div class="a" style="left:652px;top:308px;width:74px;height:28px;background:#f2f2f2;"></div>
<div class="a" style="left:729px;top:308px;width:164px;height:28px;background:#f2f2f2;"></div>
<div class="a" style="left:896px;top:308px;width:164px;height:28px;background:#f2f2f2;"></div>

<div class="a" style="left:81px;top:337px;width:980px;height:1px;background:#c6c6c6;"></div>
<div class="a" style="left:316px;top:307px;width:1px;height:30px;background:#c2c2c2;"></div>
<div class="a" style="left:483px;top:307px;width:1px;height:30px;background:#c2c2c2;"></div>
<div class="a" style="left:650px;top:307px;width:1px;height:30px;background:#c2c2c2;"></div>
<div class="a" style="left:727px;top:307px;width:1px;height:30px;background:#c2c2c2;"></div>
<div class="a" style="left:894px;top:307px;width:1px;height:30px;background:#c2c2c2;"></div>
<div class="cell" style="letter-spacing:-0.160px;left:88.00px;top:314px;color:#4a4a4a;">Вид работы</div>
<div class="cell" style="letter-spacing:-0.261px;left:325.00px;top:314px;color:#4a4a4a;">Дата начала</div>
<div class="cell" style="letter-spacing:-0.140px;left:492.00px;top:314px;color:#4a4a4a;">Дата окончания</div>
<div class="cell" style="letter-spacing:0.108px;left:658.00px;top:314px;color:#4a4a4a;">Время</div>
<div class="cell" style="letter-spacing:-0.156px;left:735.00px;top:314px;color:#4a4a4a;">Исполнитель</div>
<div class="cell" style="letter-spacing:-0.124px;left:902.00px;top:314px;color:#4a4a4a;">Инициатор</div>
<div class="cell" style="left:461px;top:312px;color:#333;font-size:15px;font-family:'DejaVu Sans',sans-serif;">↓</div>
<div class="a" style="left:81px;top:338px;width:980px;height:28px;background:#fafafa;"></div>
<div class="a" style="left:81px;top:366px;width:980px;height:1px;background:#e6e6e6;"></div>
<svg style="left:88px;top:337px" width="18" height="29" viewBox="88 337 18 29"><rect x="89.5" y="348.5" width="14" height="7.4" fill="#cfe1f6" stroke="#5b88c4" stroke-width="1"/><path d="M91.4 353.4 C92.6 349.6 93.8 349.6 95 352.2 S97.6 353.8 98.6 351.6 L101.6 351.2" fill="none" stroke="#1f4f9c" stroke-width="0.9"/></svg>
<div class="cell" style="letter-spacing:-0.084px;left:112.00px;top:345px;">Выполнение заданий</div>
<div class="cell" style="letter-spacing:-0.082px;left:325.00px;top:345px;">08.11.23 15:39</div>
<div class="cell" style="letter-spacing:-0.082px;left:492.00px;top:345px;">08.11.23 16:24</div>
<div class="cell" style="letter-spacing:-0.194px;left:659.00px;top:345px;">0:45</div>
<div class="cell" style="letter-spacing:0.009px;left:736.00px;top:345px;">Соломахин Руслан</div>
<div class="cell" style="letter-spacing:0.036px;left:903.00px;top:345px;">Закупка, ООО</div>
<div class="a" style="left:81px;top:367px;width:980px;height:28px;background:#ffffff;"></div>
<div class="a" style="left:81px;top:395px;width:980px;height:1px;background:#e6e6e6;"></div>
<svg style="left:88px;top:366px" width="18" height="29" viewBox="88 366 18 29"><rect x="89.5" y="377.5" width="14" height="7.4" fill="#cfe1f6" stroke="#5b88c4" stroke-width="1"/><path d="M91.4 382.4 C92.6 378.6 93.8 378.6 95 381.2 S97.6 382.8 98.6 380.6 L101.6 380.2" fill="none" stroke="#1f4f9c" stroke-width="0.9"/></svg>
<div class="cell" style="letter-spacing:0.029px;left:112.00px;top:374px;">Работа с документами</div>
<div class="cell" style="letter-spacing:-0.082px;left:325.00px;top:374px;">08.11.23 16:24</div>
<div class="cell" style="letter-spacing:-0.082px;left:492.00px;top:374px;">08.11.23 16:54</div>
<div class="cell" style="letter-spacing:-0.194px;left:659.00px;top:374px;">0:30</div>
<div class="cell" style="letter-spacing:0.086px;left:735.00px;top:374px;">Васильев Петр Ивано...</div>
<div class="cell" style="letter-spacing:0.036px;left:903.00px;top:374px;">Закупка, ООО</div>
<div class="a" style="left:81px;top:396px;width:980px;height:28px;background:#fafafa;"></div>
<div class="a" style="left:81px;top:424px;width:980px;height:1px;background:#e6e6e6;"></div>
<svg style="left:88px;top:395px" width="18" height="29" viewBox="88 395 18 29"><rect x="89.5" y="406.5" width="14" height="7.4" fill="#cfe1f6" stroke="#5b88c4" stroke-width="1"/><path d="M91.4 411.4 C92.6 407.6 93.8 407.6 95 410.2 S97.6 411.8 98.6 409.6 L101.6 409.2" fill="none" stroke="#1f4f9c" stroke-width="0.9"/></svg>
<div class="cell" style="letter-spacing:0.029px;left:112.00px;top:403px;">Работа с документами</div>
<div class="cell" style="letter-spacing:-0.082px;left:325.00px;top:403px;">08.11.23 16:54</div>
<div class="cell" style="letter-spacing:-0.082px;left:492.00px;top:403px;">08.11.23 18:24</div>
<div class="cell" style="letter-spacing:-0.194px;left:659.00px;top:403px;">1:30</div>
<div class="cell" style="letter-spacing:0.059px;left:735.00px;top:403px;">Шатова Марина Алекс...</div>
<div class="cell" style="letter-spacing:0.036px;left:903.00px;top:403px;">Закупка, ООО</div>
<div class="a" style="left:81px;top:425px;width:980px;height:28px;background:#fff;"></div><div class="a" style="left:317px;top:426px;width:744px;height:26px;background:#c0c0c0;"></div>
<div class="a" style="left:316px;top:425px;width:1px;height:28px;background:#fff;"></div>
<div class="a" style="left:483px;top:425px;width:1px;height:28px;background:#fff;"></div>
<div class="a" style="left:650px;top:425px;width:1px;height:28px;background:#fff;"></div>
<div class="a" style="left:727px;top:425px;width:1px;height:28px;background:#fff;"></div>
<div class="a" style="left:894px;top:425px;width:1px;height:28px;background:#fff;"></div>
<div class="a" style="left:81px;top:426px;width:235px;height:26px;box-sizing:border-box;border:2px solid #000;background:#808080;"></div>
<div class="a" style="left:81px;top:453px;width:980px;height:1px;background:#e6e6e6;"></div>
<svg style="left:88px;top:424px" width="18" height="29" viewBox="88 424 18 29"><rect x="89.5" y="435.5" width="14" height="7.4" fill="#cfe1f6" stroke="#5b88c4" stroke-width="1"/><path d="M91.4 440.4 C92.6 436.6 93.8 436.6 95 439.2 S97.6 440.8 98.6 438.6 L101.6 438.2" fill="none" stroke="#1f4f9c" stroke-width="0.9"/></svg>
<div class="cell" style="letter-spacing:0.029px;left:112.00px;top:432px;">Работа с документами</div>
<div class="cell" style="letter-spacing:-0.082px;left:325.00px;top:432px;">08.11.23 18:24</div>
<div class="cell" style="letter-spacing:-0.082px;left:492.00px;top:432px;">08.11.23 20:24</div>
<div class="cell" style="letter-spacing:-0.194px;left:659.00px;top:432px;">2:00</div>
<div class="cell" style="letter-spacing:-0.019px;left:735.00px;top:432px;">Богданова Ирина</div>
<div class="cell" style="letter-spacing:0.036px;left:903.00px;top:432px;">Закупка, ООО</div>

<!-- scroll buttons under table -->
<div class="a" style="left:965px;top:548px;width:97px;height:22px;box-sizing:border-box;border:1px solid #a0a0a0;background:#fff;"></div>
<div class="a" style="left:989px;top:549px;width:1px;height:20px;background:#a0a0a0;"></div>
<div class="a" style="left:1013px;top:549px;width:1px;height:20px;background:#a0a0a0;"></div>
<div class="a" style="left:1037px;top:549px;width:1px;height:20px;background:#a0a0a0;"></div>

<svg style="left:960px;top:266px" width="110" height="310" viewBox="960 266 110 310">
<!-- copy button doc + plus -->

<g fill="#a9a9a9">
<rect x="973" y="556" width="9.2" height="1"/><path d="M977.6 557 L982.2 562 H973 Z"/>
<path d="M1001.6 557 L1006.2 562 H997 Z"/>
<path d="M1021 557.2 H1030.2 L1025.6 562.2 Z"/>
<path d="M1045 557.2 H1054.2 L1049.6 561.8 Z"/><rect x="1045" y="562" width="9.2" height="1"/>
</g>
<!-- search magnifier -->
<circle cx="962.8" cy="282" r="3.7" fill="none" stroke="#2a6fa8" stroke-width="1.6"/>
<path d="M965.6 284.9 L969.8 289.2" stroke="#2a6fa8" stroke-width="2.1" stroke-linecap="round"/>
</svg>
<svg style="left:160px;top:266px" width="800" height="34" viewBox="160 266 800 34">
<path d="M176 277.4 H183.2 L186.6 280.8 V290.4 H176 Z" fill="#fff" stroke="#7c8ca4" stroke-width="0.9"/>
<path d="M183.2 277.4 V280.8 H186.6" fill="#eef1f6" stroke="#7c8ca4" stroke-width="0.7"/>
<circle cx="178.8" cy="287.7" r="3.9" fill="#2fa838" stroke="#1f8a2a" stroke-width="0.5"/>
<path d="M178.8 285.4 V290 M176.5 287.7 H181.1" stroke="#fff" stroke-width="1.4"/>
<!-- search clear x -->
<path d="M926.8 281 L932 286.2 M932 281 L926.8 286.2" stroke="#555" stroke-width="1" fill="none"/>
</svg>



<!-- ===== description & lower fields ===== -->
<div class="a" style="left:80px;top:574px;width:982px;height:1px;background:repeating-linear-gradient(90deg,#d2d2d2 0 4px,transparent 4px 6px);"></div>
<div class="t" style="letter-spacing:-0.103px;left:80.50px;top:580px;color:#4a4a4a;">Описание:</div>
<div class="a" style="left:80px;top:599px;width:982px;height:91px;box-sizing:border-box;border:1px solid #d6d6d6;border-radius:3px;background:#fff;"></div>

<div class="t" style="letter-spacing:0.532px;left:79.50px;top:704px;color:#4a4a4a;">Вес:</div>
<div class="inp" style="left:276px;top:699px;width:102px;height:25px;"></div>
<div class="isep" style="left:356px;top:700px;height:23px;"></div>
<div class="a" style="left:357px;top:711px;width:20px;height:1px;background:#a0a0a0;"></div>
<div class="t" style="left:345px;top:704px;">0</div>
<div class="q" style="left:384.5px;top:704px;">?</div>
<div class="t" style="letter-spacing:0.068px;left:505.00px;top:704px;color:#4a4a4a;">Общий вес:</div>
<div class="inp" style="left:581px;top:699px;width:91px;height:25px;border-color:#d2d2d2;"></div>
<div class="t" style="left:653px;top:704px;">20</div>
<div class="q" style="left:678px;top:704px;">?</div>

<div class="t" style="letter-spacing:-0.083px;left:79.50px;top:738px;color:#4a4a4a;">Плановая длительность:</div>
<div class="inp" style="left:276px;top:733px;width:102px;height:25px;"></div>
<div class="isep" style="left:356px;top:734px;height:23px;"></div>
<div class="a" style="left:357px;top:745px;width:20px;height:1px;background:#a0a0a0;"></div>
<div class="t" style="left:328px;top:738px;">0,00</div>
<div class="q" style="left:384.5px;top:738px;">?</div>
<div class="inp" style="left:402px;top:733px;width:92px;height:25px;"></div>
<div class="isep" style="left:472px;top:734px;height:23px;"></div>
<div class="t" style="left:406px;top:738px;">час</div>
<div class="arr" style="left:480px;top:743.5px;"></div>

<div class="t" style="letter-spacing:-0.146px;left:80.50px;top:772px;color:#4a4a4a;">Дата начала выполнения работ:</div>
<div class="inp" style="left:276px;top:767px;width:203px;height:25px;"></div>
<div class="isep" style="left:436px;top:768px;height:23px;"></div>
<div class="isep" style="left:457px;top:768px;height:23px;"></div>
<div class="t" style="letter-spacing:-0.089px;left:280.00px;top:772px;">08.11.2023 15:43:16</div>
<div class="q" style="left:485.5px;top:772px;">?</div>

<svg style="left:270px;top:694px" width="230" height="104" viewBox="270 694 230 104">
<g fill="#444">
<path d="M366.8 705.2 L368.8 707.4 H364.8 Z"/><path d="M364.8 716 H368.8 L366.8 718.2 Z"/>
<path d="M366.8 739.2 L368.8 741.4 H364.8 Z"/><path d="M364.8 750 H368.8 L366.8 752.2 Z"/>
</g>
<rect x="442" y="774.2" width="9.2" height="8.8" rx="0.8" fill="#4a4a4a"/><rect x="443.6" y="773" width="1.3" height="2.4" fill="#4a4a4a"/><rect x="448.3" y="773" width="1.3" height="2.4" fill="#4a4a4a"/><rect x="443" y="776.8" width="7.2" height="5.2" fill="#fff"/><rect x="443.6" y="777.6" width="1.3" height="1" fill="#4a4a4a"/><rect x="443.6" y="779.5" width="1.3" height="1" fill="#4a4a4a"/><rect x="445.8" y="777.6" width="1.3" height="1" fill="#4a4a4a"/><rect x="445.8" y="779.5" width="1.3" height="1" fill="#4a4a4a"/><rect x="448.0" y="777.6" width="1.3" height="1" fill="#4a4a4a"/><rect x="448.0" y="779.5" width="1.3" height="1" fill="#4a4a4a"/>
<path d="M464.8 776.2 L470 781.4 M470 776.2 L464.8 781.4" stroke="#555" stroke-width="1" fill="none"/>
</svg>



<!-- ===== right column ===== -->
<div class="hdr" style="left:1092px;top:198px;width:227px;height:26px;"></div>
<div class="t b" style="letter-spacing:-0.091px;left:1097.00px;top:204px;">Исполнитель:</div>
<div class="btn" style="left:1092px;top:241px;width:30px;height:26px;"></div>
<div class="btn" style="left:1289px;top:241px;width:30px;height:26px;"></div>
<div class="t" style="left:1298px;top:246px;font-size:11px;color:#555;">...</div>
<div class="t" style="letter-spacing:-0.180px;left:1166.70px;top:244px;font-size:17px;line-height:22px;color:#404040;">Бухгалтерия</div>
<div class="hdr" style="left:1092px;top:284px;width:227px;height:27px;"></div>
<div class="t b" style="letter-spacing:-0.242px;left:1097.00px;top:290px;color:#111;">Даты:</div>
<div class="a" style="left:1258px;top:290px;width:15px;height:15px;box-sizing:border-box;border:1px solid #a8a8a8;border-radius:2px;background:#fff;"></div>
<div class="q" style="left:1280.4px;top:290px;font-size:13px;-webkit-text-stroke:0;">?</div>
<div class="t" style="letter-spacing:-0.174px;left:1092.50px;top:321px;color:#4a4a4a;">Отреагировать до:</div>
<div class="inp" style="left:1092px;top:340px;width:204px;height:25px;"></div>
<div class="isep" style="left:1252px;top:341px;height:23px;"></div>
<div class="isep" style="left:1273px;top:341px;height:23px;"></div>
<div class="t" style="letter-spacing:-0.117px;left:1096.20px;top:345px;">08.11.2023 16:00:00</div>
<div class="arr" style="left:1259px;top:350px;"></div>
<div class="t" style="letter-spacing:-0.065px;left:1091.50px;top:375px;color:#4a4a4a;">Выполнить до:</div>
<div class="inp" style="left:1092px;top:394px;width:204px;height:25px;"></div>
<div class="isep" style="left:1252px;top:395px;height:23px;"></div>
<div class="isep" style="left:1273px;top:395px;height:23px;"></div>
<div class="t" style="letter-spacing:-0.117px;left:1096.20px;top:399px;">09.11.2023 12:00:00</div>
<div class="arr" style="left:1259px;top:404px;"></div>
<div class="hdr" style="left:1092px;top:428px;width:227px;height:26px;"></div>
<div class="t b" style="letter-spacing:0.060px;left:1097.00px;top:433px;">Текущий этап:</div>
<div class="t" style="letter-spacing:-0.306px;left:1172.50px;top:469px;font-size:17px;line-height:22px;color:#111;">Согласовано</div>
<div class="hdr" style="left:1092px;top:504px;width:227px;height:26px;"></div>
<div class="t b" style="letter-spacing:0.253px;left:1097.60px;top:510px;">Перевести задание на этап:</div>
<div class="inp" style="left:1092px;top:540px;width:133px;height:24px;"></div>
<div class="isep" style="left:1182px;top:541px;height:22px;"></div>
<div class="isep" style="left:1203px;top:541px;height:22px;"></div>
<div class="t" style="left:1171px;top:544px;">0</div>
<div class="arr" style="left:1189.6px;top:549.4px;"></div>
<div class="t" style="letter-spacing:-0.186px;left:1231.00px;top:544px;color:#4a4a4a;">% выполнения</div>
<div class="hdr" style="left:1092px;top:641px;width:227px;height:30px;"></div>
<div class="t b" style="letter-spacing:0.127px;left:1097.50px;top:647px;">Трудозатраты:</div>
<div class="hdr" style="left:1092px;top:680px;width:227px;height:26px;"></div>
<div class="t b" style="letter-spacing:-0.109px;left:1097.50px;top:686px;">Теги:</div>
<div class="inp" style="left:1092px;top:715px;width:227px;height:25px;"></div>
<div class="isep" style="left:1297px;top:716px;height:23px;"></div>
<div class="t" style="letter-spacing:-0.181px;left:1094.30px;top:720px;color:#c6c6c6;">Выберите или введите тег</div>
<div class="arr" style="left:1304.2px;top:725px;"></div>

<svg style="left:1086px;top:236px" width="240" height="520" viewBox="1086 236 240 520">
<!-- chain -->
<g fill="none" stroke="#6a6a6a" stroke-width="1.3">
<rect x="1099.4" y="252.4" width="8.4" height="5.2" rx="2.6"/><rect x="1106.6" y="252.4" width="8.4" height="5.2" rx="2.6"/>
<path d="M1103.4 255 H1111" stroke-width="1.5"/>
</g>
<!-- two people -->
<g>
<circle cx="1151.4" cy="249.2" r="2.7" fill="#f3c64a" stroke="#b88a1c" stroke-width="0.6"/>
<path d="M1146.8 257 C1146.8 253.4 1149 252.2 1151.4 252.2 S1156 253.4 1156 257 Z" fill="#45a832" stroke="#2f8a22" stroke-width="0.5"/>
<circle cx="1159" cy="249.2" r="2.7" fill="#f3c64a" stroke="#b88a1c" stroke-width="0.6"/>
<path d="M1154.4 257 C1154.4 253.4 1156.6 252.2 1159 252.2 S1163.6 253.4 1163.6 257 Z" fill="#3a86d2" stroke="#2a68aa" stroke-width="0.5"/>
<path d="M1158.3 252.4 H1159.7 L1159.9 256.2 L1159 257 L1158.1 256.2 Z" fill="#e03a2a"/>
<path d="M1150.6 252.4 H1152.2 L1151.4 254 Z" fill="#fff"/>
</g>
<!-- check mark blue -->
<path d="M1261 296.6 L1264.6 301.2 L1273.4 289.6" fill="none" stroke="#1a78d2" stroke-width="2.1"/>
<!-- info yellow -->
<path d="M1300 292 H1312 Q1313.8 292 1313.8 293.8 V304.6 L1311 302.6 H1300 Q1298.2 302.6 1298.2 300.8 V293.8 Q1298.2 292 1300 292 Z" fill="#ffd84c" stroke="#e8a422" stroke-width="1"/>
<rect x="1305.4" y="296.4" width="1.5" height="4.4" fill="#e88a1a"/><rect x="1305.4" y="294" width="1.5" height="1.5" fill="#e88a1a"/>
<!-- calendars -->
<rect x="1279.6" y="347.2" width="9.2" height="8.8" rx="0.8" fill="#4a4a4a"/><rect x="1281.2" y="346" width="1.3" height="2.4" fill="#4a4a4a"/><rect x="1285.9" y="346" width="1.3" height="2.4" fill="#4a4a4a"/><rect x="1280.6" y="349.8" width="7.2" height="5.2" fill="#fff"/><rect x="1281.2" y="350.6" width="1.3" height="1" fill="#4a4a4a"/><rect x="1281.2" y="352.5" width="1.3" height="1" fill="#4a4a4a"/><rect x="1283.4" y="350.6" width="1.3" height="1" fill="#4a4a4a"/><rect x="1283.4" y="352.5" width="1.3" height="1" fill="#4a4a4a"/><rect x="1285.6" y="350.6" width="1.3" height="1" fill="#4a4a4a"/><rect x="1285.6" y="352.5" width="1.3" height="1" fill="#4a4a4a"/>
<rect x="1279.6" y="401.2" width="9.2" height="8.8" rx="0.8" fill="#4a4a4a"/><rect x="1281.2" y="400" width="1.3" height="2.4" fill="#4a4a4a"/><rect x="1285.9" y="400" width="1.3" height="2.4" fill="#4a4a4a"/><rect x="1280.6" y="403.8" width="7.2" height="5.2" fill="#fff"/><rect x="1281.2" y="404.6" width="1.3" height="1" fill="#4a4a4a"/><rect x="1281.2" y="406.5" width="1.3" height="1" fill="#4a4a4a"/><rect x="1283.4" y="404.6" width="1.3" height="1" fill="#4a4a4a"/><rect x="1283.4" y="406.5" width="1.3" height="1" fill="#4a4a4a"/><rect x="1285.6" y="404.6" width="1.3" height="1" fill="#4a4a4a"/><rect x="1285.6" y="406.5" width="1.3" height="1" fill="#4a4a4a"/>
<!-- green heart check -->
<path d="M1141.6 477.6 C1141.4 474.4 1145 473.4 1146.8 476.2 L1147.6 477.6 L1151.8 474 C1154.6 471.8 1158 474.6 1156 477.4 L1148 485 C1145.6 482.6 1141.8 480.4 1141.6 477.6 Z" fill="#5ec222" stroke="#3c9412" stroke-width="1" stroke-linejoin="round"/>
<!-- x in percent input -->
<path d="M1210.6 548 L1216.2 553.6 M1216.2 548 L1210.6 553.6" stroke="#555" stroke-width="1" fill="none"/>
<!-- labor icons (disabled) -->
<g opacity="0.9">
<circle cx="1219" cy="656.6" r="5.6" fill="#d4d7da" stroke="#a9aeb3" stroke-width="1.7"/>
<path d="M1214.4 651 L1212 649" stroke="#a9aeb3" stroke-width="2.8" stroke-linecap="round"/>
<path d="M1219 656.4 L1215.6 653.2" stroke="#d8a4a4" stroke-width="0.8"/>
<path d="M1222 654 L1226.8 657.8 L1222 661.6 Z" fill="#b4bcc6" stroke="#9aa4b0" stroke-width="0.6"/>
<circle cx="1258.6" cy="656.6" r="5.6" fill="#d4d7da" stroke="#a9aeb3" stroke-width="1.7"/>
<path d="M1254 651 L1251.6 649" stroke="#a9aeb3" stroke-width="2.8" stroke-linecap="round"/>
<path d="M1258.6 656.4 L1255.2 653.2" stroke="#d8a4a4" stroke-width="0.8"/>
<rect x="1260.6" y="656" width="6" height="6.4" fill="#c6ced8" stroke="#9aa4b0" stroke-width="0.8"/>
<path d="M1292 662.4 L1293 658.8 L1301.4 650.4 L1304.4 653.4 L1296 661.6 Z" fill="#b8c2a4" stroke="#a0a890" stroke-width="0.6"/>
<path d="M1301.4 650.4 L1302.6 649.6 C1303.6 649 1305.6 651 1305 652 L1304.4 653.4 Z" fill="#9aa4b8"/>
<path d="M1292 662.4 L1293 658.8 L1295.4 661.4 Z" fill="#c8a890"/>
</g>
</svg>



<!-- ===== footer ===== -->
<div class="t lnk" style="letter-spacing:-0.044px;left:100.00px;top:814px;">Изменён: 08.11.2023 15:54:01 Администратор</div>
<div class="t" style="letter-spacing:0.066px;left:796.20px;top:814px;color:#9a3412;">Проведен</div>
<div class="t lnk" style="letter-spacing:-0.240px;left:978.40px;top:814px;">Диаграмма Ганта</div>
<div class="a" style="left:69px;top:840px;width:1250px;height:35px;background:#fbebd9;"></div>
<div class="t" style="letter-spacing:-0.238px;left:74.40px;top:850px;color:#4a4a4a;">Оценка:</div>
<div class="inp" style="left:127px;top:845px;width:1187px;height:25px;"></div>
<div class="isep" style="left:1292px;top:846px;height:23px;"></div>
<div class="t" style="letter-spacing:0.203px;left:129.60px;top:850px;">Без оценки</div>
<div class="arr" style="left:1299px;top:855px;"></div>

<svg style="left:60px;top:806px" width="1030" height="30" viewBox="60 806 1030 30">
<!-- user -->
<circle cx="76.4" cy="817.6" r="3" fill="#e8b060" stroke="#6a4a20" stroke-width="0.7"/>
<path d="M72 825.8 C72 822.2 74 821.2 76.4 821.2 S81 822.2 81 825.8 Z" fill="#2f8fc4"/>
<path d="M75.6 821.2 L76.4 823 L77.2 821.2 Z" fill="#fff"/>
<!-- posted -->
<rect x="770.4" y="816.8" width="11.4" height="8.6" fill="#f4f4f4" stroke="#8a8a8a" stroke-width="0.9"/>
<g fill="#8a8a8a"><rect x="772.4" y="818.8" width="7.4" height="0.8"/><rect x="772.4" y="820.6" width="7.4" height="0.8"/><rect x="772.4" y="822.4" width="5" height="0.8"/></g>
<path d="M779 824.6 L781 826.8 L785 822.4" fill="none" stroke="#2fa838" stroke-width="1.8"/>
<!-- gantt bars -->
<rect x="957" y="824" width="3.8" height="4.6" fill="#e8382a"/><rect x="960.8" y="820.6" width="3.8" height="8" fill="#f4a622"/><rect x="964.6" y="816.8" width="3.8" height="11.8" fill="#3aa83a"/><rect x="968.4" y="813" width="4.2" height="15.6" fill="#2f6fc0"/>
</svg>


</body>
</html>
